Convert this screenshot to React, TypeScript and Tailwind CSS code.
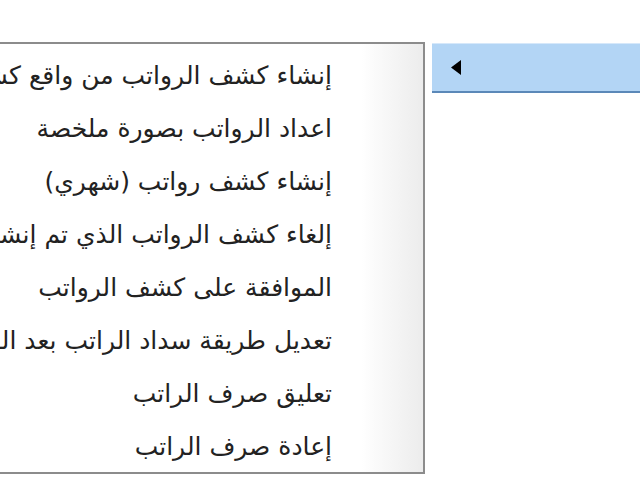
import React from "react";

const items = [
  "إنشاء كشف الرواتب من واقع كشف الحضور",
  "اعداد الرواتب بصورة ملخصة",
  "إنشاء كشف رواتب (شهري)",
  "إلغاء كشف الرواتب الذي تم إنشاؤه",
  "الموافقة على كشف الرواتب",
  "تعديل طريقة سداد الراتب بعد الموافقة",
  "تعليق صرف الراتب",
  "إعادة صرف الراتب",
];

export default function App() {
  return (
    <div
      className="w-[640px] h-[480px] bg-white overflow-hidden flex items-start pt-[42px]"
      style={{ fontFamily: '"DejaVu Sans", Tahoma, sans-serif' }}
    >
      <div className="w-[425px] h-[432px] shrink-0 border-y-2 border-r-2 border-[#8c8c8c] bg-white flex overflow-hidden">
        <div
          dir="rtl"
          className="flex-1 min-w-0 flex flex-col pt-[5px] pr-[29px] overflow-hidden"
        >
          {items.map((t) => (
            <div
              key={t}
              className="h-[53px] shrink-0 flex items-center whitespace-nowrap text-[25px] leading-none text-[#222]"
            >
              {t}
            </div>
          ))}
        </div>
        <div className="w-[62px] shrink-0 bg-gradient-to-r from-white to-[#ececec]" />
      </div>
      <div className="ml-[7px] mt-[1px] flex-1 h-[50px] bg-[#b3d5f5] border-t border-[#d6e8fa] border-b-2 border-b-[#5b88b8] flex items-center pl-[19px]">
        <svg width="10" height="15" viewBox="0 0 10 15">
          <polygon points="10,0 10,15 0,7.5" fill="#000" />
        </svg>
      </div>
    </div>
  );
}
